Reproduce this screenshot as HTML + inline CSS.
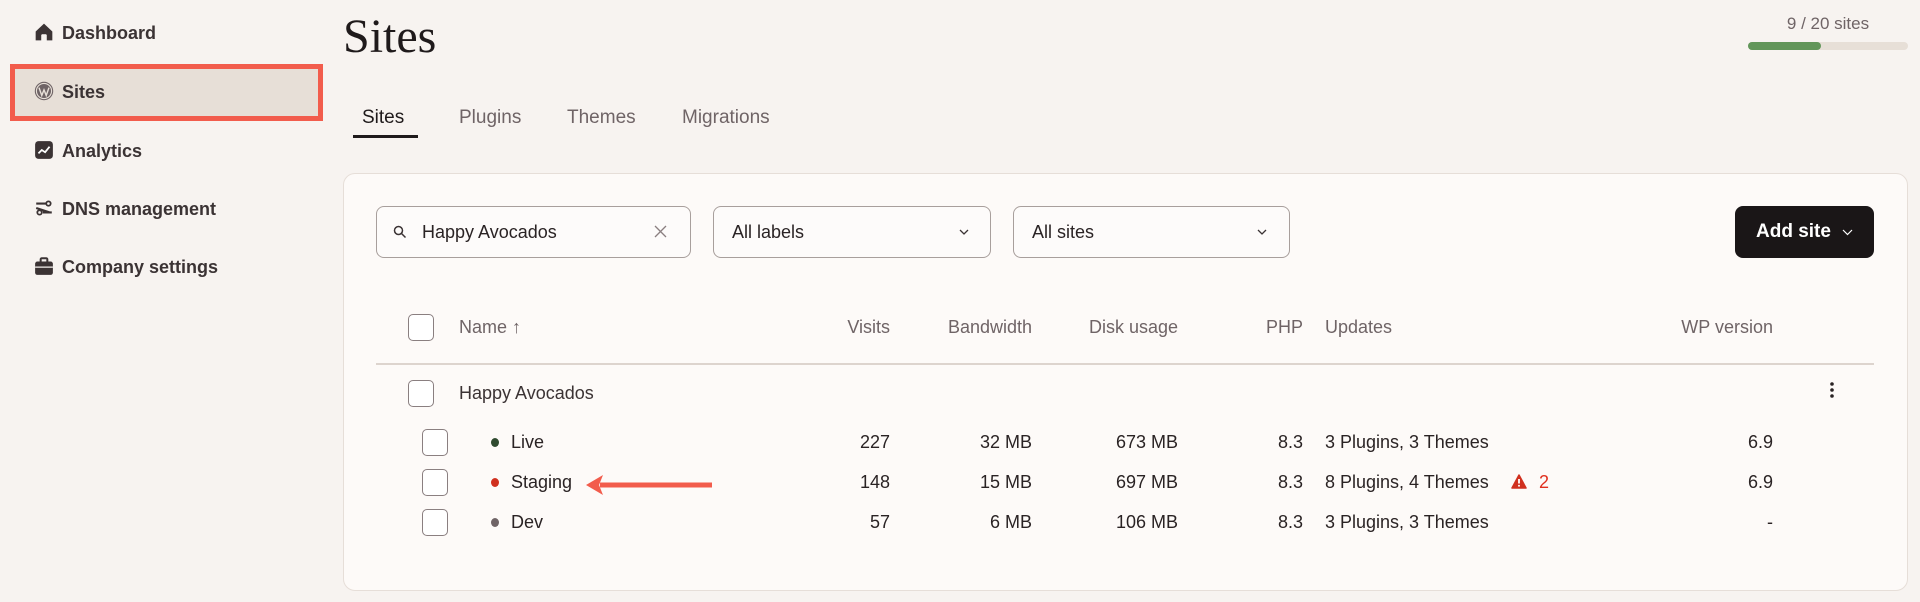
<!DOCTYPE html>
<html><head><meta charset="utf-8"><style>
*{margin:0;padding:0;box-sizing:border-box}
body{width:1920px;height:602px;background:#f7f3f0;font-family:"Liberation Sans",sans-serif;color:#2a2324;position:relative;overflow:hidden}
.a{position:absolute;white-space:nowrap}
.nav{left:62px;font-size:18px;font-weight:bold;color:#3b3334;line-height:20px}
.ic{position:absolute;left:34px;width:20px;height:20px}
.tab{top:107px;font-size:19px;color:#6f6466;line-height:22px}
.box{position:absolute;border:1.5px solid #a89f9c;border-radius:8px;background:#fdfbfa;height:52px;top:206px}
.cb{position:absolute;width:26px;height:27px;border:1.5px solid #8a7f80;border-radius:5px;background:#fff}
.h{top:317px;font-size:18px;color:#6f6466;line-height:20px}
.r{font-size:18px;line-height:20px;color:#2a2324}
.rt{text-align:right}
</style></head><body>
<!-- sidebar -->
<div class="a" style="left:10px;top:64px;width:313px;height:57px;background:#e7dfd7;border:5px solid #f25c4c"></div>
<svg class="ic" style="top:22px" viewBox="0 0 18 18"><path d="M9 1.5 1.5 8.5v8h5v-5h5v5h5v-8z" fill="#3b3334"/><rect x="7" y="11" width="4" height="6" fill="#f7f3f0"/></svg>
<div class="a nav" style="top:23px">Dashboard</div>
<svg class="ic" style="top:81px" viewBox="0 0 18 18"><circle cx="9" cy="9" r="8.3" fill="#6f6466"/><circle cx="9" cy="9" r="6.8" fill="none" stroke="#e7dfd7" stroke-width="1"/><path d="M4.5 6 7 13 9 8 11 13 13.5 6" stroke="#e7dfd7" stroke-width="1.3" fill="none"/></svg>
<div class="a nav" style="top:82px">Sites</div>
<svg class="ic" style="top:140px" viewBox="0 0 18 18"><rect x="1" y="1" width="16" height="16" rx="3" fill="#3b3334"/><path d="M4 12 7 9 10 11 14 6" stroke="#fff" stroke-width="1.6" fill="none"/></svg>
<div class="a nav" style="top:141px">Analytics</div>
<svg class="ic" style="top:198px" viewBox="0 0 18 18"><path d="M2 5h9M2 9l12 4M8 13h8" stroke="#3b3334" stroke-width="2" fill="none"/><circle cx="13" cy="5" r="2" fill="none" stroke="#3b3334" stroke-width="1.6"/><circle cx="5" cy="13" r="2" fill="none" stroke="#3b3334" stroke-width="1.6"/></svg>
<div class="a nav" style="top:199px">DNS management</div>
<svg class="ic" style="top:256px" viewBox="0 0 18 18"><rect x="1" y="5" width="16" height="12" rx="2" fill="#3b3334"/><rect x="6" y="2" width="6" height="4" rx="1" fill="none" stroke="#3b3334" stroke-width="1.8"/><path d="M1 10h16" stroke="#f7f3f0" stroke-width="1.2"/></svg>
<div class="a nav" style="top:257px">Company settings</div>
<!-- header -->
<div class="a" style="left:343px;top:9px;font-family:'Liberation Serif',serif;font-size:48px;color:#1f1a1b;line-height:56px">Sites</div>
<div class="a" style="left:1748px;top:14px;width:160px;text-align:center;font-size:17px;color:#6f6466;line-height:20px">9 / 20 sites</div>
<div class="a" style="left:1748px;top:42px;width:160px;height:8px;border-radius:4px;background:#e7dfd7"></div>
<div class="a" style="left:1748px;top:42px;width:73px;height:8px;border-radius:4px;background:#62965a"></div>
<div class="a tab" style="left:362px;color:#1f1a1b">Sites</div>
<div class="a tab" style="left:459px">Plugins</div>
<div class="a tab" style="left:567px">Themes</div>
<div class="a tab" style="left:682px">Migrations</div>
<div class="a" style="left:353px;top:135px;width:65px;height:3px;background:#1f1a1b"></div>
<!-- card -->
<div class="a" style="left:343px;top:173px;width:1565px;height:418px;background:#fdfaf8;border:1.5px solid #e6ded8;border-radius:12px"></div>
<div class="box" style="left:376px;width:315px"></div>
<svg class="a" style="left:393px;top:225px" width="14" height="14" viewBox="0 0 14 14"><circle cx="5.5" cy="5.5" r="4" stroke="#3b3334" stroke-width="1.5" fill="none"/><path d="M8.5 8.5 12.5 12.5" stroke="#3b3334" stroke-width="1.5"/></svg>
<div class="a r" style="left:422px;top:222px">Happy Avocados</div>
<svg class="a" style="left:654px;top:225px" width="13" height="13" viewBox="0 0 13 13"><path d="M1 1 12 12M12 1 1 12" stroke="#8a7f80" stroke-width="1.3"/></svg>
<div class="box" style="left:713px;width:278px"></div>
<div class="a r" style="left:732px;top:222px">All labels</div>
<svg class="a" style="left:959px;top:229px" width="10" height="7" viewBox="0 0 10 7"><path d="M1 1 5 5 9 1" stroke="#3b3334" stroke-width="1.3" fill="none"/></svg>
<div class="box" style="left:1013px;width:277px"></div>
<div class="a r" style="left:1032px;top:222px">All sites</div>
<svg class="a" style="left:1257px;top:229px" width="10" height="7" viewBox="0 0 10 7"><path d="M1 1 5 5 9 1" stroke="#3b3334" stroke-width="1.3" fill="none"/></svg>
<div class="a" style="left:1735px;top:206px;width:139px;height:52px;background:#1a1617;border-radius:8px"></div>
<div class="a" style="left:1756px;top:221px;font-size:19px;font-weight:bold;color:#fff;line-height:22px">Add site</div>
<svg class="a" style="left:1842px;top:229px" width="11" height="7" viewBox="0 0 11 7"><path d="M1 1 5.5 5.5 10 1" stroke="#fff" stroke-width="1.2" fill="none"/></svg>
<!-- table header -->
<div class="cb" style="left:408px;top:314px"></div>
<div class="a h" style="left:459px">Name ↑</div>
<div class="a h rt" style="left:790px;width:100px">Visits</div>
<div class="a h rt" style="left:900px;width:132px">Bandwidth</div>
<div class="a h rt" style="left:1040px;width:138px">Disk usage</div>
<div class="a h rt" style="left:1200px;width:103px">PHP</div>
<div class="a h" style="left:1325px">Updates</div>
<div class="a h rt" style="left:1600px;width:173px">WP version</div>
<div class="a" style="left:376px;top:363px;width:1498px;height:2px;background:#ddd4ce"></div>
<!-- group -->
<div class="cb" style="left:408px;top:380px"></div>
<div class="a r" style="left:459px;top:383px;color:#3b3334">Happy Avocados</div>
<svg class="a" style="left:1829px;top:381px" width="6" height="18" viewBox="0 0 6 18"><circle cx="3" cy="3" r="1.8" fill="#2a2324"/><circle cx="3" cy="9" r="1.8" fill="#2a2324"/><circle cx="3" cy="15" r="1.8" fill="#2a2324"/></svg>
<!-- rows -->
<div class="cb" style="left:422px;top:429px"></div>
<div class="a" style="left:491px;top:438px;width:8px;height:9px;border-radius:50%;background:#2f4a2f"></div>
<div class="a r" style="left:511px;top:432px">Live</div>
<div class="a r rt" style="left:790px;top:432px;width:100px">227</div>
<div class="a r rt" style="left:930px;top:432px;width:102px">32 MB</div>
<div class="a r rt" style="left:1060px;top:432px;width:118px">673 MB</div>
<div class="a r rt" style="left:1230px;top:432px;width:73px">8.3</div>
<div class="a r" style="left:1325px;top:432px">3 Plugins, 3 Themes</div>
<div class="a r rt" style="left:1700px;top:432px;width:73px">6.9</div>

<div class="cb" style="left:422px;top:469px"></div>
<div class="a" style="left:491px;top:478px;width:8px;height:9px;border-radius:50%;background:#d0301f"></div>
<div class="a r" style="left:511px;top:472px">Staging</div>
<svg class="a" style="left:586px;top:474px" width="126" height="22" viewBox="0 0 126 22"><path d="M14 11H126" stroke="#f25c4c" stroke-width="5"/><path d="M0 11 17 1 13 11 17 21z" fill="#f25c4c"/></svg>
<div class="a r rt" style="left:790px;top:472px;width:100px">148</div>
<div class="a r rt" style="left:930px;top:472px;width:102px">15 MB</div>
<div class="a r rt" style="left:1060px;top:472px;width:118px">697 MB</div>
<div class="a r rt" style="left:1230px;top:472px;width:73px">8.3</div>
<div class="a r" style="left:1325px;top:472px">8 Plugins, 4 Themes</div>
<svg class="a" style="left:1511px;top:474px" width="16" height="15" viewBox="0 0 16 15"><path d="M8 1 15 14H1z" fill="#d0301f" stroke="#d0301f" stroke-linejoin="round" stroke-width="1.5"/><path d="M8 5v4.5" stroke="#fff" stroke-width="1.8"/><circle cx="8" cy="11.7" r="1" fill="#fff"/></svg>
<div class="a r" style="left:1539px;top:472px;color:#e0301f">2</div>
<div class="a r rt" style="left:1700px;top:472px;width:73px">6.9</div>

<div class="cb" style="left:422px;top:509px"></div>
<div class="a" style="left:491px;top:518px;width:8px;height:9px;border-radius:50%;background:#6f6466"></div>
<div class="a r" style="left:511px;top:512px">Dev</div>
<div class="a r rt" style="left:790px;top:512px;width:100px">57</div>
<div class="a r rt" style="left:930px;top:512px;width:102px">6 MB</div>
<div class="a r rt" style="left:1060px;top:512px;width:118px">106 MB</div>
<div class="a r rt" style="left:1230px;top:512px;width:73px">8.3</div>
<div class="a r" style="left:1325px;top:512px">3 Plugins, 3 Themes</div>
<div class="a r rt" style="left:1700px;top:512px;width:73px">-</div>
</body></html>
